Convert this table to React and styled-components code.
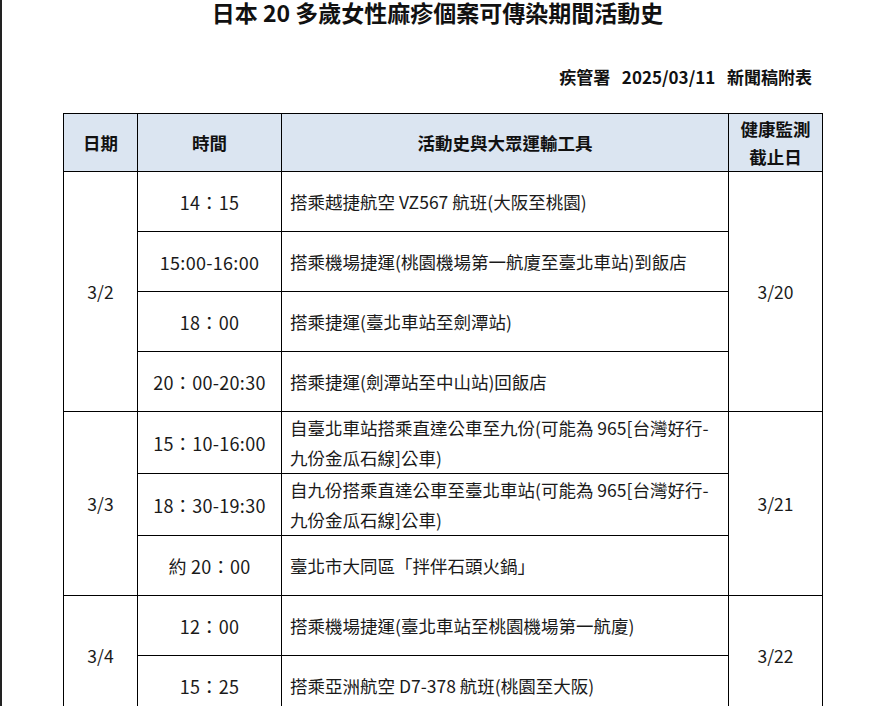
import React from 'react';
import styled, { createGlobalStyle } from 'styled-components';

const GlobalStyle = createGlobalStyle`
    html, body {
        margin : 0;
        padding : 0;
        background : #fff;
        overflow : hidden;
    }
    body {
        font-family : "Noto Sans CJK TC", "Noto Sans", sans-serif;
        color : #111;
    }
`;

const Page = styled.div`
    min-height : 706px;
    border-left : 2px solid #222;
    box-sizing : border-box;
`;

const Title = styled.h1`
    margin : 0;
    padding-top : 1px;
    font-size : 23px;
    line-height : 22px;
    font-weight : 700;
    text-align : center;
    color : #111;
`;

const Source = styled.div`
    margin : 42px 61px 0 0;
    font-size : 17px;
    line-height : 24px;
    font-weight : 700;
    text-align : right;
    word-spacing : 2px;
    white-space : pre;
`;

const Table = styled.table`
    margin : 24px 0 0 61px;
    border-collapse : collapse;
    table-layout : fixed;
    width : 759px;
    font-size : 17.5px;
`;

const HeadCell = styled.th`
    background : #dbe5f1;
    border : 1px solid #000;
    height : 57px;
    padding : 0;
    font-weight : 700;
    font-size : 17.5px;
    line-height : 28px;
    text-align : center;
    width : ${({ $w }) => $w}px;
`;

const Cell = styled.td`
    border : 1px solid #000;
    height : ${({ $tall }) => ($tall ? 61 : 59)}px;
    padding : ${({ $left }) => ($left ? '0 6px 0 8px' : '0')};
    line-height : 30px;
    text-align : ${({ $left }) => ($left ? 'left' : 'center')};
    vertical-align : middle;
    white-space : nowrap;
    color : #1a1a1a;
`;

const TimeCell = styled(Cell)`
    font-size : 18px;
    letter-spacing : 0.3px;
`;

const groups = [
    {
        date : '3/2',
        end : '3/20',
        rows : [
            ['14：15', ['搭乘越捷航空 VZ567 航班(大阪至桃園)']],
            ['15:00-16:00', ['搭乘機場捷運(桃園機場第一航廈至臺北車站)到飯店']],
            ['18：00', ['搭乘捷運(臺北車站至劍潭站)']],
            ['20：00-20:30', ['搭乘捷運(劍潭站至中山站)回飯店']],
        ],
    },
    {
        date : '3/3',
        end : '3/21',
        rows : [
            ['15：10-16:00', ['自臺北車站搭乘直達公車至九份(可能為 965[台灣好行-', '九份金瓜石線]公車)']],
            ['18：30-19:30', ['自九份搭乘直達公車至臺北車站(可能為 965[台灣好行-', '九份金瓜石線]公車)']],
            ['約 20：00', ['臺北市大同區「拌伴石頭火鍋」']],
        ],
    },
    {
        date : '3/4',
        end : '3/22',
        rows : [
            ['12：00', ['搭乘機場捷運(臺北車站至桃園機場第一航廈)']],
            ['15：25', ['搭乘亞洲航空 D7-378 航班(桃園至大阪)']],
        ],
    },
];

function GroupRows({ group }) {
    return group.rows.map(([time, lines], i) => {
        const tall = lines.length > 1;
        return (
            <tr key={i}>
                {i === 0 && <Cell rowSpan={group.rows.length}>{group.date}</Cell>}
                <TimeCell $tall={tall}>{time}</TimeCell>
                <Cell $tall={tall} $left>
                    {lines.map((line, j) => (
                        <React.Fragment key={j}>
                            {j > 0 && <br />}
                            {line}
                        </React.Fragment>
                    ))}
                </Cell>
                {i === 0 && <Cell rowSpan={group.rows.length}>{group.end}</Cell>}
            </tr>
        );
    });
}

export default function App() {
    return (
        <Page>
            <GlobalStyle />
            <Title>日本 20 多歲女性麻疹個案可傳染期間活動史</Title>
            <Source>{'疾管署  2025/03/11  新聞稿附表'}</Source>
            <Table>
                <thead>
                    <tr>
                        <HeadCell $w={73}>日期</HeadCell>
                        <HeadCell $w={143}>時間</HeadCell>
                        <HeadCell $w={446}>活動史與大眾運輸工具</HeadCell>
                        <HeadCell $w={93}>健康監測<br />截止日</HeadCell>
                    </tr>
                </thead>
                <tbody>
                    {groups.map((g) => (
                        <GroupRows key={g.date} group={g} />
                    ))}
                </tbody>
            </Table>
        </Page>
    );
}
